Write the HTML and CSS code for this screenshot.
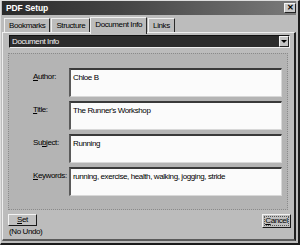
FILE: index.html
```html
<!DOCTYPE html>
<html>
<head>
<meta charset="utf-8">
<link rel="stylesheet" href="styles.css">
</head>
<body>
<div class="window">
  <div class="titlebar">
    <span class="title">PDF Setup</span>
    <span class="close">&#x2715;</span>
  </div>
  <div class="tabs">
    <div class="tab">Bookmarks</div>
    <div class="tab">Structure</div>
    <div class="tab active">Document Info</div>
    <div class="tab">Links</div>
  </div>
  <div class="panel">
    <div class="combo">
      <span class="combo-text">Document Info</span>
      <span class="combo-btn"><span class="arrow"></span></span>
    </div>
    <div class="group">
      <label class="lbl"><u>A</u>uthor:</label>
      <div class="field">Chloe B</div>
      <label class="lbl"><u>T</u>itle:</label>
      <div class="field">The Runner's Workshop</div>
      <label class="lbl">Su<u>b</u>ject:</label>
      <div class="field">Running</div>
      <label class="lbl"><u>K</u>eywords:</label>
      <div class="field">running, exercise, health, walking, jogging, stride</div>
    </div>
    <div class="footer">
      <div class="set-col">
        <button class="btn"><u>S</u>et</button>
        <span class="note">(No Undo)</span>
      </div>
      <button class="btn cancel"><u>C</u>ancel</button>
    </div>
  </div>
</div>
</body>
</html>
```
FILE: styles.css
```css
* { box-sizing: border-box; }
html, body { margin: 0; padding: 0; background: #bdbdbd; }
body {
  width: 300px;
  height: 245px;
  font-family: "Liberation Sans", Arial, sans-serif;
  font-size: 8px;
  letter-spacing: -0.4px;
  color: #000;
}
.window {
  width: 300px;
  height: 245px;
  background: #bcbcbc;
  border-style: solid;
  border-width: 1px 2px 2px 1px;
  border-color: #dedede #1c1c1c #1c1c1c #dedede;
  padding: 0 2px 2px 1px;
  display: flex;
  flex-direction: column;
}
.titlebar {
  height: 14px;
  background: linear-gradient(to right, #2b2b2b 0%, #444 40%, #7a7a7a 100%);
  display: flex;
  align-items: center;
  justify-content: space-between;
  padding: 0 0 0 4px;
}
.title {
  color: #fff;
  font-weight: bold;
  font-size: 8.5px;
  letter-spacing: -0.1px;
}
.close {
  width: 12px;
  height: 10px;
  background: #c8c8c8;
  border: 1px solid;
  border-color: #f4f4f4 #222 #222 #f4f4f4;
  font-size: 8px;
  font-weight: bold;
  line-height: 8px;
  text-align: center;
  color: #000;
  letter-spacing: 0;
}
.tabs {
  display: flex;
  align-items: flex-end;
  height: 16px;
  padding-left: 2px;
  margin-top: 1px;
  position: relative;
  z-index: 1;
}
.tab {
  height: 14px;
  padding: 0 4px;
  border: 1px solid;
  border-bottom: none;
  border-color: #f0f0f0 #2a2a2a #2a2a2a #f0f0f0;
  line-height: 13px;
  margin-right: 1px;
  background: #bcbcbc;
}
.tab.active {
  height: 17px;
  margin-bottom: -2px;
  margin-left: -1px;
  padding: 0 4px;
  line-height: 14px;
}
.panel {
  flex: 1;
  border-style: solid;
  border-width: 1px 2px 2px 1px;
  border-color: #efefef #1e1e1e #5a5a5a #efefef;
  padding: 2px 4px 0 6px;
  display: flex;
  flex-direction: column;
}
.combo {
  height: 13px;
  background: #2c2c2c;
  border: 1px solid;
  border-color: #111 #efefef #efefef #111;
  display: flex;
  align-items: center;
  justify-content: space-between;
  padding-left: 2px;
}
.combo-text { color: #f2f2f2; }
.combo-btn {
  width: 10px;
  height: 11px;
  background: #c4c4c4;
  border: 1px solid;
  border-color: #f4f4f4 #222 #222 #f4f4f4;
  display: flex;
  align-items: center;
  justify-content: center;
}
.arrow {
  width: 0;
  height: 0;
  border-left: 3px solid transparent;
  border-right: 3px solid transparent;
  border-top: 3px solid #000;
}
.group {
  margin-top: 5px;
  margin-left: -1px;
  margin-right: 2px;
  border: 1px dotted #8a8a8a;
  background: #b4b4b4;
  padding: 14px 2px 13px 24px;
  display: grid;
  grid-template-columns: 36px 213px;
  row-gap: 4px;
}
.lbl { padding-top: 4px; }
.field {
  height: 29px;
  background: #fbfbfb;
  border-style: solid;
  border-width: 2px 1px 1px 2px;
  border-color: #3a3a3a #d8d8d8 #d8d8d8 #5a5a5a;
  padding: 2px 2px;
  line-height: 11px;
}
.footer {
  display: flex;
  justify-content: space-between;
  align-items: flex-start;
  margin-top: 4px;
}
.set-col { display: flex; flex-direction: column; }
.btn {
  font: inherit;
  letter-spacing: inherit;
  color: #000;
  width: 29px;
  height: 12px;
  padding: 0;
  line-height: 10px;
  background: #c0c0c0;
  border: 1px solid;
  border-color: #f2f2f2 #1a1a1a #1a1a1a #f2f2f2;
  margin-left: -1px;
}
.btn.cancel { height: 14px; margin-right: -1px; outline: 1px dotted #555; outline-offset: -3px; }
.note { margin-top: 1px; line-height: 10px; }
```
